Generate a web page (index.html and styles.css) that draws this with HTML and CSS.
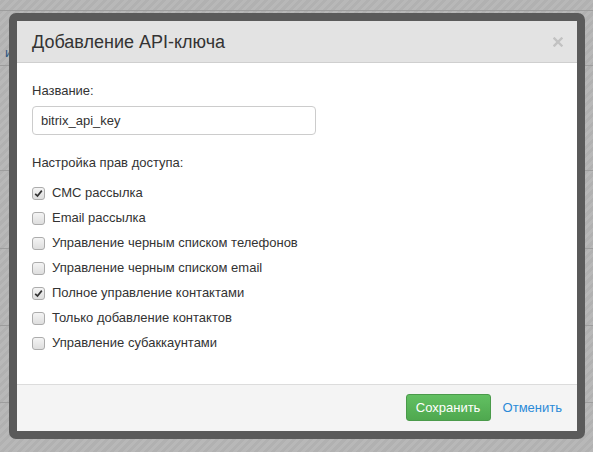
FILE: index.html
```html
<!DOCTYPE html>
<html lang="ru">
<head>
<meta charset="utf-8">
<title>Добавление API-ключа</title>
<link rel="stylesheet" href="styles.css">
</head>
<body>
<div class="page">
  <div class="row r1"></div>
  <div class="row r2"><span class="bg-link">им</span></div>
  <div class="row r3"></div>
  <div class="row r4"></div>
  <div class="row r5"></div>
  <div class="row r6"></div>
  <div class="row r7"></div>
</div>

<div class="modal-frame">
  <div class="modal">
    <div class="modal-header">
      <h3 class="modal-title">Добавление API-ключа</h3>
      <span class="close"><svg width="10" height="10" viewBox="0 0 10 10"><path d="M1.5 1.5 L8.5 8.5 M8.5 1.5 L1.5 8.5" stroke="#c2c2c2" stroke-width="2.4" stroke-linecap="square"/></svg></span>
    </div>
    <div class="modal-body">
      <label class="field-label">Название:</label>
      <div class="input">bitrix_api_key</div>
      <div class="field-label perms">Настройка прав доступа:</div>
      <ul class="checks">
        <li><span class="cb checked"><svg width="9" height="9" viewBox="0 0 9 9"><path d="M1.2 4.8 L3.5 7 L7.8 1.6" fill="none" stroke="#333" stroke-width="1.7"/></svg></span>СМС рассылка</li>
        <li><span class="cb"></span>Email рассылка</li>
        <li><span class="cb"></span>Управление черным списком телефонов</li>
        <li><span class="cb"></span>Управление черным списком email</li>
        <li><span class="cb checked"><svg width="9" height="9" viewBox="0 0 9 9"><path d="M1.2 4.8 L3.5 7 L7.8 1.6" fill="none" stroke="#333" stroke-width="1.7"/></svg></span>Полное управление контактами</li>
        <li><span class="cb"></span>Только добавление контактов</li>
        <li><span class="cb"></span>Управление субаккаунтами</li>
      </ul>
    </div>
    <div class="modal-footer">
      <button class="btn-save">Сохранить</button>
      <a class="cancel" href="#">Отменить</a>
    </div>
  </div>
</div>
</body>
</html>
```
FILE: styles.css
```css
html, body {
  margin: 0;
  padding: 0;
}
body {
  width: 593px;
  height: 452px;
  overflow: hidden;
  position: relative;
  font-family: "Liberation Sans", Arial, sans-serif;
  background-color: #b5b5b5;
  background-image: repeating-linear-gradient(-45deg, #b8b8b8 0px, #b8b8b8 3px, #b1b1b1 3px, #b1b1b1 6px);
}
.page {
  display: flex;
  flex-direction: column;
}
.row {
  border-bottom: 1px solid #9d9d9d;
  box-sizing: border-box;
  position: relative;
}
.r1 { height: 11px; }
.r2 { height: 55px; }
.r3 { height: 105px; }
.r4 { height: 78px; }
.r5 { height: 77px; }
.r6 { height: 77px; }
.r7 { height: 60px; border-bottom: none; }
.bg-link {
  position: absolute;
  left: 5px;
  top: 34px;
  font-size: 13px;
  color: #2a5680;
}

.modal-frame {
  position: absolute;
  left: 9px;
  top: 13px;
  padding: 8px;
  background: #5a5a5a;
  border-radius: 7px;
}
.modal {
  width: 560px;
  height: 410px;
  background: #fff;
  display: flex;
  flex-direction: column;
}
.modal-header {
  height: 41px;
  background: #e3e3e3;
  border-bottom: 1px solid #cfcfcf;
  display: flex;
  align-items: center;
  justify-content: space-between;
  padding: 0 14px 0 15px;
}
.modal-title {
  margin: 0;
  font-weight: normal;
  font-size: 18px;
  color: #333;
  position: relative;
  top: 1px;
}
.close {
  display: flex;
  position: relative;
  top: 0px;
}
.modal-body {
  flex: 1;
  padding: 19px 15px 0 15px;
  font-size: 13px;
  color: #333;
}
.field-label {
  display: block;
  line-height: 18px;
}
.input {
  margin-top: 6px;
  width: 284px;
  height: 29px;
  box-sizing: border-box;
  border: 1px solid #cccccc;
  border-radius: 4px;
  padding: 0 8px;
  line-height: 27px;
  font-size: 13px;
  color: #333;
}
.perms {
  margin-top: 19px;
}
.checks {
  list-style: none;
  margin: 8px 0 0 0;
  padding: 0;
}
.checks li {
  height: 25px;
  line-height: 25px;
  display: flex;
  align-items: center;
}
.cb {
  width: 13px;
  height: 13px;
  box-sizing: border-box;
  border: 1px solid #acacac;
  border-radius: 3px;
  background: linear-gradient(#f4f4f4, #dedede);
  margin-right: 7px;
  display: flex;
  align-items: center;
  justify-content: center;
  position: relative;
  top: 1px;
}
.modal-footer {
  height: 46px;
  background: #f4f4f4;
  border-top: 1px solid #dcdcdc;
  display: flex;
  align-items: center;
  justify-content: flex-end;
  padding: 0 15px;
  gap: 12px;
}
.btn-save {
  width: 85px;
  height: 27px;
  border: 1px solid #4a9a4a;
  border-radius: 3px;
  background: linear-gradient(#62c062, #4fa84f);
  color: #fff;
  font-family: "Liberation Sans", Arial, sans-serif;
  font-size: 13px;
  padding: 0;
  position: relative;
  top: -1px;
}
.cancel {
  color: #2a8ad8;
  font-size: 13px;
  text-decoration: none;
  position: relative;
  top: -1px;
}
```
